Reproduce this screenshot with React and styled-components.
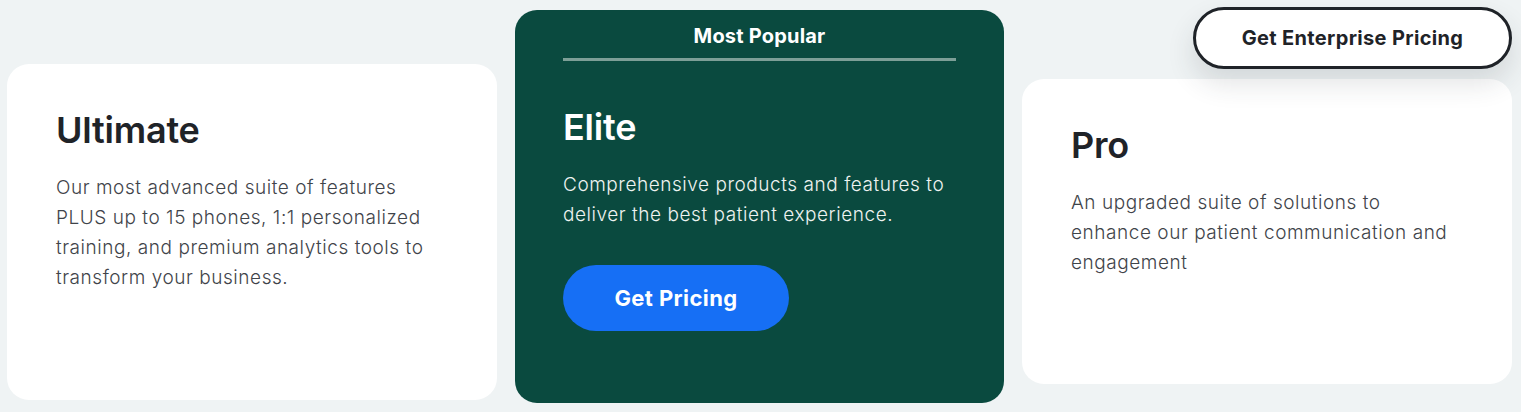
import React from "react";
import styled, { createGlobalStyle } from "styled-components";

const Global = createGlobalStyle`
  html, body { margin: 0; padding: 0; background: #eff3f4; }
  body { font-family: Inter, "Noto Sans", sans-serif; -webkit-font-smoothing: antialiased; }
  * { box-sizing: border-box; }
`;

const Row = styled.div`
  display: flex;
  align-items: flex-start;
  gap: 18px;
  padding: 7px 9px 0 7px;
  width: 1521px;
  height: 412px;
  overflow: hidden;
`;

const Card = styled.div`
  flex: none;
  width: ${(p) => p.$w || 490}px;
  height: ${(p) => p.$h}px;
  margin-top: ${(p) => p.$mt || 0}px;
  border-radius: 22px;
  background: ${(p) => (p.$dark ? "#0a4a3f" : "#ffffff")};
  color: ${(p) => (p.$dark ? "#ffffff" : "#1f2328")};
  padding: ${(p) => p.$pt}px 48px 0 ${(p) => (p.$dark ? 48 : 49)}px;
  display: flex;
  flex-direction: column;
  align-items: flex-start;
`;

const Column = styled.div`
  flex: none;
  width: 490px;
  display: flex;
  flex-direction: column;
  align-items: flex-end;
  gap: 10px;
`;

const Badge = styled.div`
  align-self: stretch;
  text-align: center;
  font-weight: 700;
  font-size: 20px;
  line-height: 24px;
  padding-bottom: 10px;
  border-bottom: 3px solid #7d9f97;
  letter-spacing: 0.2px;
`;

const Title = styled.h2`
  margin: ${(p) => p.$mt || 0}px 0 0;
  font-size: 36px;
  line-height: 44px;
  font-weight: 600;
  letter-spacing: -0.2px;
`;

const Desc = styled.p`
  margin: 21px 0 0;
  max-width: 390px;
  font-size: 19px;
  line-height: 30px;
  font-weight: 300;
  letter-spacing: 0.55px;
  color: ${(p) => (p.$dark ? "#eef3f1" : "#3f444a")};
`;

const PrimaryButton = styled.button`
  margin-top: 35px;
  width: 226px;
  height: 66px;
  border: none;
  border-radius: 33px;
  background: #166ff5;
  color: #ffffff;
  font-family: inherit;
  font-size: 22px;
  font-weight: 700;
  letter-spacing: 0.4px;
  cursor: pointer;
`;

const OutlineButton = styled.button`
  width: 319px;
  height: 62px;
  border: 3px solid #1f2328;
  border-radius: 31px;
  background: #ffffff;
  color: #1f2328;
  font-family: inherit;
  font-size: 20px;
  font-weight: 700;
  letter-spacing: 0.35px;
  box-shadow: 0 14px 28px rgba(40, 50, 60, 0.14);
  cursor: pointer;
  position: relative;
  z-index: 1;
`;

export default function App() {
  return (
    <>
      <Global />
      <Row>
        <Card $h={336} $mt={57} $pt={44}>
          <Title>Ultimate</Title>
          <Desc>
            Our most advanced suite of features PLUS up to 15 phones, 1:1 personalized training, and premium
            analytics tools to transform your business.
          </Desc>
        </Card>
        <Card $dark $w={489} $h={393} $mt={3} $pt={14}>
          <Badge>Most Popular</Badge>
          <Title $mt={44}>Elite</Title>
          <Desc $dark>Comprehensive products and features to deliver the best patient experience.</Desc>
          <PrimaryButton>Get Pricing</PrimaryButton>
        </Card>
        <Column>
          <OutlineButton>Get Enterprise Pricing</OutlineButton>
          <Card $h={305} $pt={44}>
            <Title>Pro</Title>
            <Desc>An upgraded suite of solutions to enhance our patient communication and engagement</Desc>
          </Card>
        </Column>
      </Row>
    </>
  );
}
